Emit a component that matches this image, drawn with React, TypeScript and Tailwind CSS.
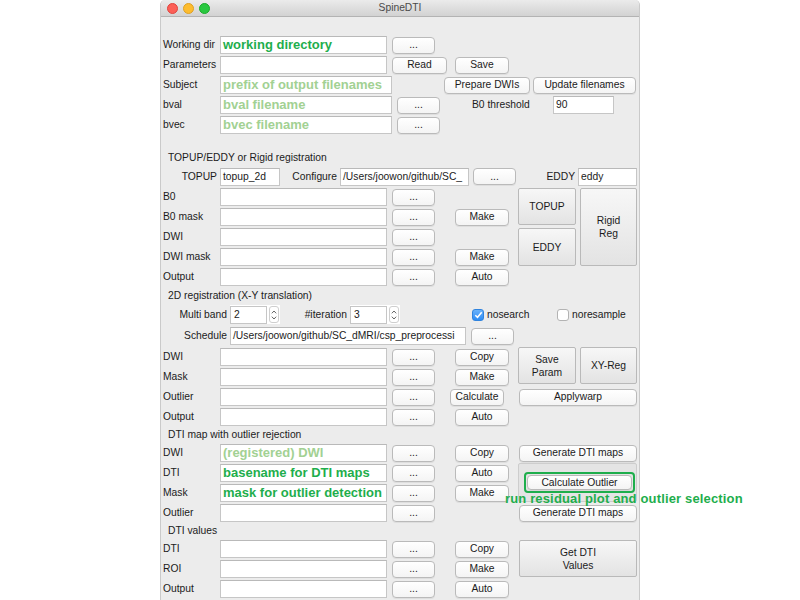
import React from "react";

type Tone = "plain" | "light" | "bright";

const Label = ({ children, w = "w-[59px]", right = false }: { children: React.ReactNode; w?: string; right?: boolean }) => (
  <div className={`${w} shrink-0 text-[10.3px] text-[#1b1b1b] whitespace-nowrap ${right ? "text-right pr-[3px]" : "pl-[2px]"}`}>
    {children}
  </div>
);

const Field = ({ w, children, tone = "plain" }: { w: string; children?: React.ReactNode; tone?: Tone }) => {
  const toneCls =
    tone === "light"
      ? "text-[13px] font-bold text-[#a2d193]"
      : tone === "bright"
        ? "text-[13px] font-bold text-[#1eae4c]"
        : "text-[10.3px] text-[#1b1b1b]";
  return (
    <div className={`${w} shrink-0 h-[18px] bg-white border border-[#c6c6c6] border-t-[#b9b9b9] flex items-center pl-[2px] overflow-hidden whitespace-nowrap ${toneCls}`}>
      {children}
    </div>
  );
};

const Btn = ({ w = "w-[43px]", ml = "", children = "...", h = "h-[17px]" }: { w?: string; ml?: string; children?: React.ReactNode; h?: string }) => (
  <div className={`${w} ${ml} ${h} shrink-0 rounded-[4px] border border-[#bababa] bg-linear-to-b from-white to-[#f4f4f4] shadow-[0_1px_0_rgba(0,0,0,0.06)] flex items-center justify-center text-[10.3px] text-[#1b1b1b] whitespace-nowrap`}>
    {children}
  </div>
);

const BigBtn = ({ className, children }: { className: string; children: React.ReactNode }) => (
  <div className={`${className} shrink-0 rounded-[2px] border border-[#b9b9b9] bg-linear-to-b from-[#f7f7f7] to-[#e3e3e3] flex items-center justify-center text-center text-[10.3px] leading-[13px] text-[#1b1b1b]`}>
    {children}
  </div>
);

const Row = ({ children, h = "h-5" }: { children: React.ReactNode; h?: string }) => (
  <div className={`flex items-center ${h}`}>{children}</div>
);

const Section = ({ children }: { children: React.ReactNode }) => (
  <div className="h-[16px] pl-[7px] flex items-center text-[10.3px] text-[#1b1b1b]">{children}</div>
);

const FileRow = ({ label, tone, text, extra, extraMl = "ml-[20px]" }: { label: string; tone?: Tone; text?: string; extra?: string; extraMl?: string }) => (
  <Row>
    <Label>{label}</Label>
    <Field w="w-[167px]" tone={tone}>{text}</Field>
    <Btn ml="ml-[5px]" />
    {extra && <Btn ml={extraMl} w="w-[54px]">{extra}</Btn>}
  </Row>
);

const Spin = ({ value }: { value: string }) => (
  <div className="w-[50px] h-[19px] shrink-0 bg-white flex items-center">
    <div className="w-[37px] h-[18px] border border-[#c6c6c6] flex items-center pl-[3px] text-[10.3px] text-[#1b1b1b]">{value}</div>
    <div className="ml-[2px] w-[10px] h-[17px] rounded-[3px] border border-[#cfcfcf] flex flex-col items-center justify-center gap-[2px]">
      <svg width="6" height="4" viewBox="0 0 6 4"><path d="M0.8 3.3 L3 1 L5.2 3.3" fill="none" stroke="#555" strokeWidth="0.9" /></svg>
      <svg width="6" height="4" viewBox="0 0 6 4"><path d="M0.8 0.7 L3 3 L5.2 0.7" fill="none" stroke="#555" strokeWidth="0.9" /></svg>
    </div>
  </div>
);

const Check = ({ checked, label, w }: { checked: boolean; label: string; w: string }) => (
  <div className={`${w} shrink-0 flex items-center gap-[3px]`}>
    {checked ? (
      <div className="w-[12px] h-[12px] rounded-[3px] bg-linear-to-b from-[#68b1fa] to-[#2a8cf5] border border-[#2f83de] flex items-center justify-center">
        <svg width="9" height="8" viewBox="0 0 9 8"><path d="M1.3 4.2 L3.5 6.3 L7.7 1.2" fill="none" stroke="white" strokeWidth="1.5" /></svg>
      </div>
    ) : (
      <div className="w-[12px] h-[12px] rounded-[3px] bg-white border border-[#b3b3b3]" />
    )}
    <span className="text-[10.3px] text-[#1b1b1b]">{label}</span>
  </div>
);

export default function App() {
  return (
    <div className="w-[800px] h-[600px] bg-white overflow-hidden font-['Liberation_Sans',Arial,sans-serif]">
      <div className="ml-[160px] w-[480px] h-[600px] bg-[#ececec] border-x border-[#cacaca] rounded-t-[5px] relative">
        {/* title bar */}
        <div className="h-[17px] rounded-t-[5px] bg-linear-to-b from-[#ebebeb] to-[#d2d2d2] border-b border-[#b3b3b3] flex items-center relative">
          <div className="flex gap-[5px] pl-[6px]">
            <div className="w-[11px] h-[11px] rounded-full bg-[#fc5f57] border border-[#e0443e]" />
            <div className="w-[11px] h-[11px] rounded-full bg-[#fdbc2e] border border-[#dea123]" />
            <div className="w-[11px] h-[11px] rounded-full bg-[#29c840] border border-[#1aab29]" />
          </div>
          <div className="absolute inset-0 flex items-center justify-center text-[10.3px] text-[#4a4a4a]">SpineDTI</div>
        </div>

        <div className="pt-[18px]">
          <Row>
            <Label>Working dir</Label>
            <Field w="w-[167px]" tone="bright">working directory</Field>
            <Btn ml="ml-[5px]" />
          </Row>
          <Row>
            <Label>Parameters</Label>
            <Field w="w-[167px]" />
            <Btn ml="ml-[5px]" w="w-[55px]">Read</Btn>
            <Btn ml="ml-[8px]" w="w-[54px]">Save</Btn>
          </Row>
          <Row>
            <Label>Subject</Label>
            <Field w="w-[172px]" tone="light">prefix of output filenames</Field>
            <Btn ml="ml-[52px]" w="w-[86px]">Prepare DWIs</Btn>
            <Btn ml="ml-[3px]" w="w-[103px]">Update filenames</Btn>
          </Row>
          <Row>
            <Label>bval</Label>
            <Field w="w-[172px]" tone="light">bval filename</Field>
            <Btn ml="ml-[5px]" />
            <div className="ml-[32px] w-[81px] text-[10.3px] text-[#1b1b1b]">B0 threshold</div>
            <Field w="w-[61px]">90</Field>
          </Row>
          <Row>
            <Label>bvec</Label>
            <Field w="w-[172px]" tone="light">bvec filename</Field>
            <Btn ml="ml-[5px]" />
          </Row>

          <div className="h-[15px]" />
          <Section>TOPUP/EDDY or Rigid registration</Section>
          <Row h="h-[21px]">
            <Label right>TOPUP</Label>
            <Field w="w-[60px]">topup_2d</Field>
            <Label right w="w-[60px]">Configure</Label>
            <Field w="w-[129px]">/Users/joowon/github/SC_</Field>
            <Btn ml="ml-[4px]" />
            <Label right w="w-[62px]">EDDY</Label>
            <Field w="w-[59px]">eddy</Field>
          </Row>
          <div className="flex">
            <div className="w-[357px]">
              <FileRow label="B0" />
              <FileRow label="B0 mask" extra="Make" />
              <FileRow label="DWI" />
              <FileRow label="DWI mask" extra="Make" />
              <FileRow label="Output" extra="Auto" />
            </div>
            <div className="flex gap-[4px] pt-[1px]">
              <div className="flex flex-col gap-[3px]">
                <BigBtn className="w-[58px] h-[37px]">TOPUP</BigBtn>
                <BigBtn className="w-[58px] h-[38px]">EDDY</BigBtn>
              </div>
              <BigBtn className="w-[57px] h-[78px]">Rigid<br />Reg</BigBtn>
            </div>
          </div>

          <div className="h-[17px] pl-[7px] flex items-center text-[10.3px] text-[#1b1b1b]">2D registration (X-Y translation)</div>
          <Row h="h-[21px]">
            <Label right w="w-[69px]">Multi band</Label>
            <Spin value="2" />
            <Label right w="w-[70px]">#iteration</Label>
            <Spin value="3" />
            <div className="ml-[72px]" />
            <Check checked label="nosearch" w="w-[85px]" />
            <Check checked={false} label="noresample" w="w-[80px]" />
          </Row>
          <Row h="h-[22px]">
            <Label right w="w-[69px]">Schedule</Label>
            <Field w="w-[236px]">/Users/joowon/github/SC_dMRI/csp_preprocessi</Field>
            <Btn ml="ml-[5px]" />
          </Row>
          <div className="flex">
            <div className="w-[357px]">
              <FileRow label="DWI" extra="Copy" />
              <FileRow label="Mask" extra="Make" />
              <FileRow label="Outlier" extra="Calculate" extraMl="ml-[15px]" />
              <FileRow label="Output" extra="Auto" />
            </div>
            <div className="flex flex-col">
              <div className="h-[40px] flex gap-[4px]">
                <BigBtn className="w-[58px] h-[37px]">Save<br />Param</BigBtn>
                <BigBtn className="w-[57px] h-[37px]">XY-Reg</BigBtn>
              </div>
              <Row>
                <Btn ml="ml-[1px]" w="w-[118px]">Applywarp</Btn>
              </Row>
            </div>
          </div>

          <Section>DTI map with outlier rejection</Section>
          <div className="flex">
            <div className="w-[357px]">
              <FileRow label="DWI" tone="light" text="(registered) DWI" extra="Copy" />
              <FileRow label="DTI" tone="bright" text="basename for DTI maps" extra="Auto" />
              <FileRow label="Mask" tone="bright" text="mask for outlier detection" extra="Make" />
              <FileRow label="Outlier" />
            </div>
            <div className="flex flex-col">
              <Row>
                <Btn ml="ml-[1px]" w="w-[118px]">Generate DTI maps</Btn>
              </Row>
              <div className="h-[40px]">
                <div className="relative w-[119px] h-[39px] rounded-[2px] bg-[#e4e4e4] border border-[#cdcdcd]">
                  <div className="absolute left-[5px] top-[8px] w-[111px] h-[21px] rounded-[4px] border-2 border-[#1eae4c] p-[1px]">
                    <Btn w="w-full" h="h-[15px]">Calculate Outlier</Btn>
                  </div>
                  <div className="absolute z-10 left-[-14px] top-[27px] whitespace-nowrap text-[13px] leading-[15px] font-bold tracking-[0.15px] text-[#1eae4c]">
                    run residual plot and outlier selection
                  </div>
                </div>
              </div>
              <Row>
                <Btn ml="ml-[1px]" w="w-[118px]">Generate DTI maps</Btn>
              </Row>
            </div>
          </div>

          <Section>DTI values</Section>
          <div className="flex">
            <div className="w-[357px]">
              <FileRow label="DTI" extra="Copy" />
              <FileRow label="ROI" extra="Make" />
              <FileRow label="Output" extra="Auto" />
            </div>
            <div className="pt-[1px]">
              <BigBtn className="w-[118px] h-[37px] ml-[1px]">Get DTI<br />Values</BigBtn>
            </div>
          </div>
        </div>
      </div>
    </div>
  );
}
